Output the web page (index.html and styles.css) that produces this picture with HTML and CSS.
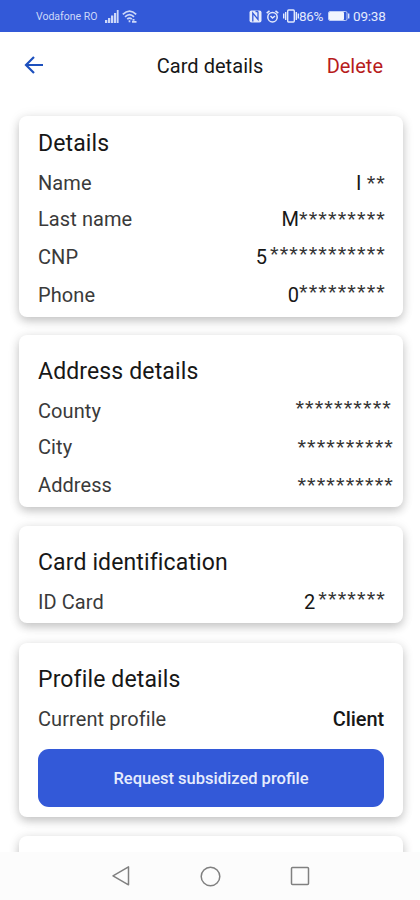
FILE: index.html
```html
<!DOCTYPE html>
<html lang="en">
<head>
  <meta charset="UTF-8" />
  <meta name="viewport" content="width=device-width, initial-scale=1" />
  <title>Card details</title>
  <link rel="stylesheet" href="styles.css">
</head>
<body>

  <!-- Status bar -->
  <div class="status-bar">
    <span class="carrier">Vodafone RO</span>
    <svg class="signal" width="14" height="13" viewBox="0 0 14 13" fill="#cdd8f8">
      <rect x="0" y="10" width="2.300" height="3" />
      <rect x="3" y="8" width="2.300" height="5" />
      <rect x="6" y="5.500" width="2.300" height="7.500" />
      <rect x="9" y="3" width="2.200" height="10" />
      <rect x="11.800" y="0" width="1.800" height="13" />
    </svg>
    <svg class="wifi" width="15" height="13" viewBox="0 0 15 13" fill="none" stroke="#cdd8f8" stroke-width="1.700">
      <path d="M.8 4.300Q7.500-2.200 14.200 4.300" />
      <path d="M3 6.800Q7.500 2.300 12 6.800" />
      <path d="M5.200 9.200Q7.500 7 9.800 9.200" />
      <path d="M7.500 10.200v2M10 11.800h4.500M10.500 9.800h2" />
    </svg>
    <span class="spacer"></span>
    <svg class="nfc" width="13" height="13" viewBox="0 0 13 13">
      <rect x=".5" y=".5" width="12" height="12" rx="2" fill="#e4eafc" />
      <path d="M3.800 11.500v-8.500l5.200 6.500v-8M6.500 1.500h2.500" fill="none" stroke="#3359d8" stroke-width="1.300" />
    </svg>
    <svg class="alarm" width="13" height="13" viewBox="0 0 13 13" fill="none" stroke="#e4eafc" stroke-width="1.500">
      <circle cx="6.500" cy="7.200" r="4.700" />
      <path d="M.7 3.200L3.500.9M12.300 3.200L9.500.9M4.500 6l2 2 2.500-2" />
    </svg>
    <svg class="vibrate" width="16" height="14" viewBox="0 0 16 14" fill="none" stroke="#e4eafc" stroke-width="1.400">
      <rect x="4.700" y="1" width="6.600" height="12" rx="1" />
      <path d="M2.700 3v8M.7 4.500v5M13.300 3v8M15.300 4.500v5" />
    </svg>
    <span class="percent">86%</span>
    <svg class="battery" width="22" height="10" viewBox="0 0 22 10">
      <rect x=".5" y=".5" width="18.500" height="9" rx="1.500" fill="none" stroke="#bfcdf6" />
      <rect x="1" y="1" width="15" height="8" rx="1" fill="#f1f4fe" />
      <path d="M20.700 2.500v5" stroke="#dbe3fb" stroke-width="1.400" />
    </svg>
    <span class="clock">09:38</span>
  </div>

  <!-- Header -->
  <header>
    <svg class="back" width="20" height="20" viewBox="0 0 20 20" fill="none" stroke="#1d50bd" stroke-width="2.200">
      <path d="M19 9H1.500M10 1L2 9l8 8" />
    </svg>
    <h1>Card details</h1>
    <a class="delete" href="#">Delete</a>
  </header>

  <!-- Cards -->
  <main>
    <section class="card card-first">
      <h2>Details</h2>
      <div class="row"><span>Name</span><b>I <i class="low">**</i></b></div>
      <div class="row"><span>Last name</span><b>M<i class="low">*********</i></b></div>
      <div class="row tall"><span>CNP</span><b>5<i class="high gap">************</i></b></div>
      <div class="row tall"><span>Phone</span><b>0<i class="high">*********</i></b></div>
    </section>

    <section class="card card-address">
      <h2>Address details</h2>
      <div class="row"><span>County</span><b class="out-county"><i class="high">**********</i></b></div>
      <div class="row"><span>City</span><b class="out"><i class="low">**********</i></b></div>
      <div class="row tall"><span>Address</span><b class="out"><i class="low">**********</i></b></div>
    </section>

    <section class="card card-id">
      <h2>Card identification</h2>
      <div class="row"><span>ID Card</span><b>2<i class="high gap">*******</i></b></div>
    </section>

    <section class="card card-profile">
      <h2>Profile details</h2>
      <div class="row"><span>Current profile</span><b class="client">Client</b></div>
      <button>Request subsidized profile</button>
    </section>

    <section class="card card-next"></section>
  </main>

  <!-- Navigation bar -->
  <nav>
    <svg width="20" height="22" viewBox="0 0 20 22" fill="none" stroke="#808080" stroke-width="1.500" stroke-linejoin="round">
      <path d="M18.500 1.800v18L3 10.800z" />
    </svg>
    <svg width="22" height="22" viewBox="0 0 22 22" fill="none" stroke="#808080" stroke-width="1.500">
      <circle cx="11.500" cy="11.500" r="9.300" />
    </svg>
    <svg width="20" height="20" viewBox="0 0 20 20" fill="none" stroke="#808080" stroke-width="1.500">
      <rect x="1.500" y="1.500" width="17" height="17" rx="1" />
    </svg>
  </nav>

</body>
</html>
```
FILE: styles.css
```css
/* Basic Reset */
* {
  margin: 0;
  padding: 0;
  box-sizing: border-box;
}

body {
  height: 900px;
  display: flex;
  flex-direction: column;
  overflow: hidden;
  font-family: Roboto, "Liberation Sans", sans-serif;
  background: #fff;
  color: #171717;
}

svg {
  display: block;
  flex: none;
}

/* Status Bar */
.status-bar {
  height: 32px;
  flex: none;
  display: flex;
  align-items: center;
  padding: 0 32px 0 36px;
  background: #3359d8;
  color: #e4eafc;
}

.carrier {
  width: 69px;
  font-size: 10.5px;
  white-space: nowrap;
  color: #cdd8f8;
}

.wifi {
  margin-left: 3px;
}

.spacer {
  flex: 1;
}

.alarm {
  margin-left: 4px;
}

.vibrate {
  margin-left: 4px;
}

.percent {
  width: 29px;
  font-size: 13.5px;
  letter-spacing: -0.3px;
}

.clock {
  width: 35px;
  margin-left: 3px;
  font-size: 13.5px;
  letter-spacing: -0.2px;
}

/* Header */
header {
  height: 68px;
  flex: none;
  display: grid;
  grid-template-columns: 1fr auto 1fr;
  align-items: center;
  padding: 0 37px 0 24px;
}

h1 {
  padding-left: 13px;
  font-size: 20px;
  font-weight: 400;
  letter-spacing: 0.05px;
}

.delete {
  justify-self: end;
  font-size: 20px;
  color: #b71c1c;
  text-decoration: none;
}

/* Cards */
main {
  height: 752px;
  flex: none;
  padding: 16px 17px 0 19px;
  overflow: hidden;
}

.card {
  padding: 13px 19px 0;
  border-radius: 8px;
  background: #fff;
  box-shadow: 0 4px 10px rgba(0, 0, 0, 0.2), 0 1px 14px rgba(0, 0, 0, 0.07);
}

.card-first {
  height: 201px;
  padding-top: 4px;
}

.card-address {
  height: 172px;
  margin-top: 18px;
}

.card-id {
  height: 97px;
  margin-top: 19px;
}

.card-profile {
  height: 174px;
  margin-top: 20px;
}

.card-next {
  height: 80px;
  margin-top: 19px;
}

h2 {
  height: 45px;
  line-height: 47px;
  font-size: 23px;
  font-weight: 400;
  letter-spacing: 0.13px;
}

.row {
  height: 36px;
  line-height: 36px;
  display: flex;
  justify-content: space-between;
  font-size: 20px;
  letter-spacing: 0.08px;
  white-space: nowrap;
}

.tall {
  height: 38px;
  line-height: 40px;
}

.row span {
  color: #3a3a3a;
}

.row b {
  font-weight: 400;
}

/* Masked characters */
.row i {
  font: 22px/1 "Liberation Sans", sans-serif;
  letter-spacing: 1.1px;
  margin-right: -2px;
  color: #333;
}

.row .low {
  vertical-align: -1px;
}

.row .high {
  vertical-align: 2px;
}

.row .gap {
  margin-left: 3px;
}

.out-county {
  margin-right: -6px;
}

.out {
  margin-right: -8px;
}

.row .client {
  font-weight: 500;
  letter-spacing: -0.1px;
}

button {
  width: 346px;
  height: 58px;
  margin-top: 12px;
  border: none;
  border-radius: 11px;
  background: #3359d8;
  color: #e6ecfd;
  font: 500 16.5px Roboto, sans-serif;
}

/* Navigation Bar */
nav {
  flex: 1;
  display: flex;
  justify-content: center;
  align-items: center;
  gap: 69px;
  background: #fcfcfc;
}
```
